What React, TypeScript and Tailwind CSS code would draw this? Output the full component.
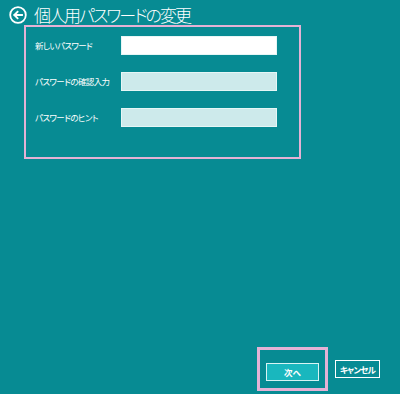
import React from 'react';

const jp = "font-['Noto_Sans_CJK_JP','Noto_Sans',sans-serif] [font-feature-settings:'palt']";

function BackIcon() {
  return (
    <svg width="18" height="18" viewBox="0 0 18 18" fill="none">
      <circle cx="9" cy="9" r="7.8" stroke="white" strokeWidth="1.8" />
      <path d="M13 9H5.5M8.5 5.8L5.3 9l3.2 3.2" stroke="white" strokeWidth="1.9" strokeLinecap="square" />
    </svg>
  );
}

const fields = [
  { label: '新しいパスワード', bg: 'bg-white' },
  { label: 'パスワードの確認入力', bg: 'bg-[#cdeaeb]' },
  { label: 'パスワードのヒント', bg: 'bg-[#cdeaeb]' },
];

export default function App() {
  return (
    <div className={`w-[400px] h-[394px] bg-[#078b93] flex flex-col ${jp}`}>
      <div className="flex items-center gap-[7px] pl-[9px] pt-[5px] h-[24px]">
        <BackIcon />
        <span className="text-white text-[17px] font-light leading-none tracking-[-2px]">個人用パスワードの変更</span>
      </div>

      <div className="ml-[24px] mt-[1px] w-[277px] h-[134px] border-2 border-[#e4b2d5] pt-[9px] pl-[9px] flex flex-col gap-[17px]">
        {fields.map((f) => (
          <div key={f.label} className="flex items-center h-[19px]">
            <span className="w-[86px] text-white text-[8.5px] leading-none tracking-[-0.6px] whitespace-nowrap">{f.label}</span>
            <div className={`w-[156px] h-[19px] ${f.bg} border border-[#e6f6f6]`} />
          </div>
        ))}
      </div>

      <div className="flex-1" />

      <div className="flex items-center justify-end pr-[20px] pb-[3px] gap-[7px]">
        <div className="border-[3px] border-[#e4b2d5] px-[6px] py-[7px]">
          <button className="w-[53px] h-[18px] bg-[#19b7be] border border-[#d8f4f4] text-white text-[8.5px] font-bold leading-none">
            次へ
          </button>
        </div>
        <button className="w-[45px] h-[18px] border border-white text-white text-[8.5px] font-bold leading-none tracking-[-0.8px] whitespace-nowrap">
          キャンセル
        </button>
      </div>
    </div>
  );
}
